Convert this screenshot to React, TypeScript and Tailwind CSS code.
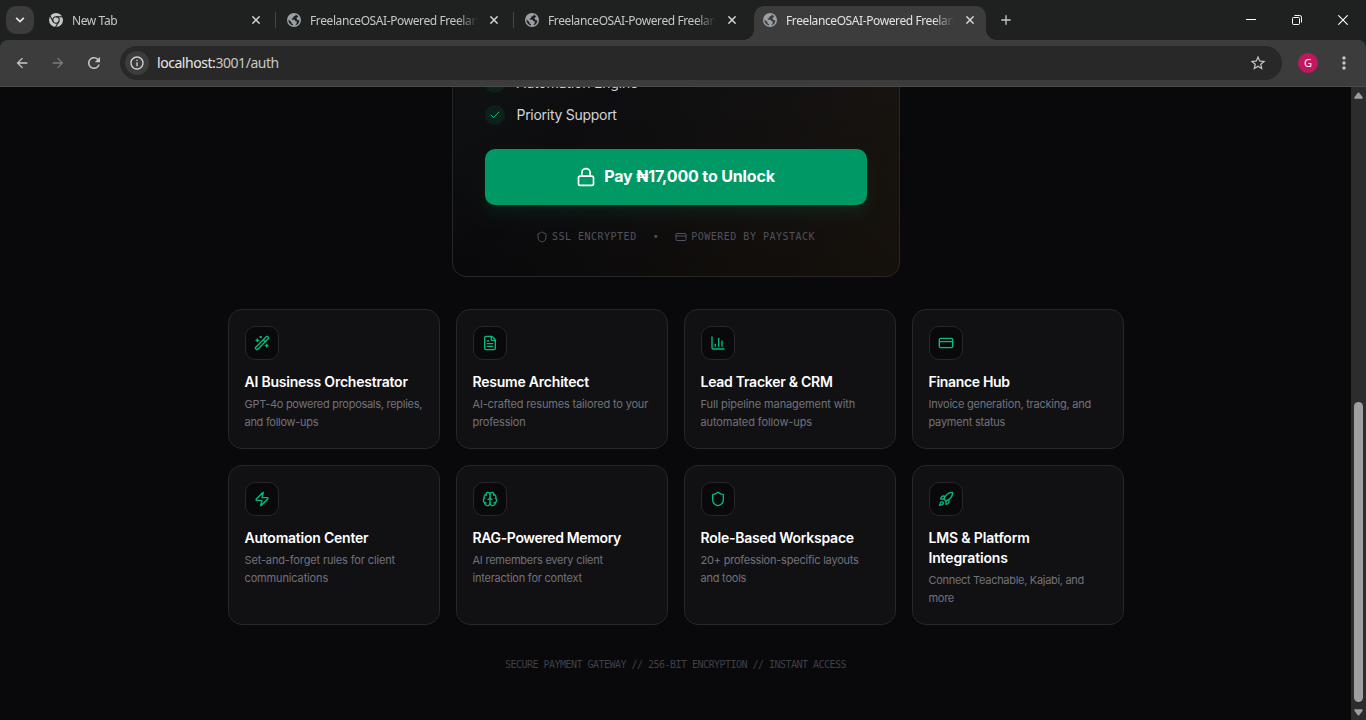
import {
  Brain,
  ChartColumn,
  Check,
  CreditCard,
  FileText,
  Lock,
  Rocket,
  Shield,
  WandSparkles,
  Zap,
} from "lucide-react";
import type { LucideIcon } from "lucide-react";
import {
  MdAdd,
  MdArrowBack,
  MdArrowForward,
  MdInfoOutline,
  MdMoreVert,
  MdRefresh,
  MdStarBorder,
} from "react-icons/md";

interface Tab {
  title: string;
  kind: "chrome" | "site";
  active?: boolean;
}

interface Feature {
  icon: LucideIcon;
  title: string;
  titleClass: string;
  description: string;
  descriptionClass: string;
}

const tabs: Tab[] = [
  { title: "New Tab", kind: "chrome" },
  { title: "FreelanceOSAI-Powered Freelan", kind: "site" },
  { title: "FreelanceOSAI-Powered Freelan", kind: "site" },
  { title: "FreelanceOSAI-Powered Freelan", kind: "site", active: true },
];

const features: Feature[] = [
  {
    icon: WandSparkles,
    title: "AI Business Orchestrator",
    titleClass: "tracking-[-0.22px]",
    description: "GPT-4o powered proposals, replies, and follow-ups",
    descriptionClass: "tracking-[-0.28px]",
  },
  {
    icon: FileText,
    title: "Resume Architect",
    titleClass: "tracking-[-0.22px]",
    description: "AI-crafted resumes tailored to your profession",
    descriptionClass: "tracking-[-0.17px]",
  },
  {
    icon: ChartColumn,
    title: "Lead Tracker & CRM",
    titleClass: "tracking-[-0.27px]",
    description: "Full pipeline management with automated follow-ups",
    descriptionClass: "tracking-[-0.1px]",
  },
  {
    icon: CreditCard,
    title: "Finance Hub",
    titleClass: "tracking-[-0.32px]",
    description: "Invoice generation, tracking, and payment status",
    descriptionClass: "tracking-[-0.23px]",
  },
  {
    icon: Zap,
    title: "Automation Center",
    titleClass: "tracking-[-0.23px]",
    description: "Set-and-forget rules for client communications",
    descriptionClass: "tracking-[-0.14px]",
  },
  {
    icon: Brain,
    title: "RAG-Powered Memory",
    titleClass: "tracking-[-0.36px]",
    description: "AI remembers every client interaction for context",
    descriptionClass: "tracking-[-0.23px]",
  },
  {
    icon: Shield,
    title: "Role-Based Workspace",
    titleClass: "tracking-[-0.25px]",
    description: "20+ profession-specific layouts and tools",
    descriptionClass: "tracking-[-0.22px]",
  },
  {
    icon: Rocket,
    title: "LMS & Platform Integrations",
    titleClass: "tracking-[-0.16px]",
    description: "Connect Teachable, Kajabi, and more",
    descriptionClass: "tracking-[-0.3px]",
  },
];

function ChromeLogo() {
  return (
    <svg className="shrink-0" width="14" height="14" viewBox="0 0 14 14" fill="none">
      <circle cx="7" cy="7" r="7" fill="#c7c7c7" />
      <g stroke="#1f2120" strokeWidth="1.1">
        <circle cx="7" cy="7" r="3.2" />
        <path d="M7 3.8h7" />
        <path d="M7 3.8h7" transform="rotate(120 7 7)" />
        <path d="M7 3.8h7" transform="rotate(240 7 7)" />
      </g>
    </svg>
  );
}

function GlobeIcon({ gap }: { gap: string }) {
  return (
    <svg className="shrink-0" width="14" height="14" viewBox="0 0 14 14" fill="none">
      <circle cx="7" cy="7" r="7" fill="#9aa0a6" />
      <path
        d="M8.6 1.4 8.4 2.9 6.4 3.4 6.2 5.1 4.6 5.8 5 6.7H7.6L8.4 8.3 10 8.6 9.6 10.2 8.2 12.3A5.5 5.5 0 0 0 12.4 7.4L10.6 6.9 9.4 5.4 10.2 4.2 11.3 3.6A5.6 5.6 0 0 0 8.6 1.4Z"
        fill={gap}
      />
      <path d="M1.5 6.4 4.4 8.9V10.2L6 11.2V12.5A5.6 5.6 0 0 1 1.5 6.4Z" fill={gap} />
    </svg>
  );
}

function BrowserTab({ title, kind, active }: Tab) {
  return (
    <div
      className={`relative flex h-[34px] w-[232px] shrink-0 items-center pb-[6px] pl-[9px] ${
        active ? "rounded-t-[10px] bg-[#3c3c3c] text-[#e3e3e3]" : "text-[#c7c7c7]"
      }`}
    >
      {kind === "chrome" ? <ChromeLogo /> : <GlobeIcon gap={active ? "#3c3c3c" : "#1f2120"} />}
      <span className="ml-[9px] w-[168px] pt-px text-[12px] leading-4 tracking-[-0.4px] whitespace-nowrap [mask-image:linear-gradient(to_right,black_88%,transparent_100%)]">
        {title}
      </span>
      <svg className="ml-3 shrink-0" width="8" height="8" viewBox="0 0 8 8" stroke="#d5d5d5" strokeWidth="1.5">
        <path d="M0.4 0.4 7.6 7.6M7.6 0.4 0.4 7.6" />
      </svg>
      {active && (
        <>
          <span className="absolute bottom-0 -left-[10px] size-[10px] bg-[radial-gradient(circle_at_0_0,transparent_9.5px,#3c3c3c_10px)]" />
          <span className="absolute -right-[10px] bottom-0 size-[10px] bg-[radial-gradient(circle_at_100%_0,transparent_9.5px,#3c3c3c_10px)]" />
        </>
      )}
    </div>
  );
}

function TabSeparator({ visible }: { visible: boolean }) {
  return (
    <div className="flex w-[6px] shrink-0 justify-center pt-[6px]">
      {visible && <div className="h-4 w-px bg-[#474747]" />}
    </div>
  );
}

function BrowserChrome() {
  return (
    <header className="h-[87px] shrink-0 bg-[#1f2120] font-['Noto_Sans',sans-serif]">
      <div className="flex h-10 pt-[6px]">
        <button className="mx-[6px] flex size-7 items-center justify-center rounded-[10px] bg-[#3c3c3c]">
          <svg width="10" height="6" viewBox="0 0 10 6" fill="none" stroke="#e3e3e3" strokeWidth="1.8">
            <path d="M1.2 0.9 5 4.6 8.8 0.9" />
          </svg>
        </button>
        {tabs.map((tab, i) => (
          <div key={i} className="flex">
            <BrowserTab {...tab} />
            <TabSeparator visible={i < 2} />
          </div>
        ))}
        <button className="ml-[6px] flex h-7 w-4 items-center justify-center text-[#c7c7c7]">
          <MdAdd size={16} className="shrink-0" />
        </button>
        <div className="-mt-[6px] ml-auto flex h-10 text-white">
          <button className="flex w-[46px] items-center justify-center">
            <svg width="10" height="10" viewBox="0 0 10 10" stroke="currentColor">
              <path d="M0 4.5h10" />
            </svg>
          </button>
          <button className="flex w-[46px] items-center justify-center">
            <svg width="10" height="10" viewBox="0 0 10 10" fill="none" stroke="currentColor">
              <rect x="0.5" y="2.5" width="7" height="7" rx="1" />
              <path d="M2.5 0.5h5.2a1.8 1.8 0 0 1 1.8 1.8v5.2" />
            </svg>
          </button>
          <button className="flex w-[46px] items-center justify-center">
            <svg width="10" height="10" viewBox="0 0 10 10" stroke="currentColor" strokeWidth="1.1">
              <path d="M0.3 0.3 9.7 9.7M9.7 0.3 0.3 9.7" />
            </svg>
          </button>
        </div>
      </div>
      <div className="flex h-[47px] items-center rounded-t-[8px] border-b border-[#4a4a4a] bg-[#3c3c3c] pl-[14px]">
        <MdArrowBack size={16} className="text-[#c7c7c7]" />
        <MdArrowForward size={16} className="ml-5 text-[#7b7b7b]" />
        <MdRefresh size={18} className="ml-[19px] text-[#c7c7c7]" />
        <div className="ml-[17px] flex h-[34px] w-[1162px] items-center rounded-full bg-[#282828] pr-[15px] pl-[5px]">
          <span className="flex size-6 items-center justify-center rounded-full bg-[#3c3c3c]">
            <MdInfoOutline size={16} className="text-[#d5d5d5]" />
          </span>
          <span className="ml-2 text-[14px] leading-5 tracking-[-0.45px] text-[#c7c7c7]">
            <span className="text-[#e8e8e8]">localhost:</span>3001/auth
          </span>
          <MdStarBorder size={18} className="ml-auto text-[#c7c7c7]" />
        </div>
        <span className="ml-4 flex size-5 items-center justify-center rounded-full bg-[#c2185b] text-[11px] text-white">
          G
        </span>
        <MdMoreVert size={20} className="ml-4 text-[#c7c7c7]" />
      </div>
    </header>
  );
}

function Included({ label, labelClass }: { label: string; labelClass: string }) {
  return (
    <li className="flex h-5 items-center gap-3">
      <span className="flex size-5 items-center justify-center rounded-full bg-emerald-500/10">
        <Check size={12} className="text-emerald-500" />
      </span>
      <span className={`text-[14px] leading-5 text-zinc-300 ${labelClass}`}>{label}</span>
    </li>
  );
}

function PaymentCard() {
  return (
    <section className="mx-auto flex h-[560px] w-[448px] shrink-0 flex-col justify-end rounded-[14px] border border-zinc-800 bg-[linear-gradient(to_bottom_right,rgb(0_188_125/0.05),transparent_50%,rgb(254_154_0/0.05)),linear-gradient(to_bottom,#111113_50%,#09090b)] p-8">
      <ul className="space-y-3">
        <Included label="Automation Engine" labelClass="tracking-[-0.18px]" />
        <Included label="Priority Support" labelClass="tracking-[-0.28px]" />
      </ul>
      <button className="mt-6 flex h-14 shrink-0 items-center justify-center gap-2 rounded-[10px] bg-emerald-600 text-white shadow-lg shadow-emerald-500/10">
        <Lock size={20} />
        <span className="pb-[2px] text-[16px] leading-6 font-bold tracking-[-0.15px]">Pay ₦17,000 to Unlock</span>
      </button>
      <div className="mt-6 flex h-[15px] shrink-0 items-center justify-center font-['DejaVu_Sans_Mono',monospace] text-[10px] leading-[15px] tracking-[0.5px] text-zinc-600">
        <Shield size={12} />
        <span className="ml-1">SSL ENCRYPTED</span>
        <span className="mx-4">•</span>
        <CreditCard size={12} />
        <span className="ml-1">POWERED BY PAYSTACK</span>
      </div>
    </section>
  );
}

function FeatureCard({ icon: Icon, title, titleClass, description, descriptionClass }: Feature) {
  return (
    <div className="rounded-[14px] border border-zinc-800 bg-[#111113] p-4">
      <div className="mb-3 flex size-[34px] items-center justify-center rounded-[10px] border border-zinc-800 bg-[#09090b]">
        <Icon size={16} className="text-emerald-500" />
      </div>
      <h3 className={`mb-1 text-[14px] leading-5 font-semibold text-white ${titleClass}`}>{title}</h3>
      <p className={`text-[11px] leading-[17.875px] text-zinc-500 ${descriptionClass}`}>{description}</p>
    </div>
  );
}

function Scrollbar() {
  return (
    <div className="flex w-[15px] shrink-0 flex-col items-center bg-[#2c2c2c]">
      <svg className="mt-[5px] shrink-0" width="9" height="7" viewBox="0 0 10 7" fill="#9f9f9f">
        <path d="M4.2 0.5Q5 -0.3 5.8 0.5L9.5 5.5Q9.8 7 9 7H1Q0.2 7 0.5 5.5Z" />
      </svg>
      <div className="mt-auto h-[300px] w-[9px] rounded-full bg-[#9f9f9f]" />
      <svg className="mt-[7px] mb-1 shrink-0" width="9" height="7" viewBox="0 0 10 7" fill="#9f9f9f">
        <path d="M4.2 6.5Q5 7.3 5.8 6.5L9.5 1.5Q9.8 0 9 0H1Q0.2 0 0.5 1.5Z" />
      </svg>
    </div>
  );
}

export default function App() {
  return (
    <div className="flex h-[720px] w-[1366px] flex-col overflow-hidden bg-[#09090b]">
      <BrowserChrome />
      <div className="flex min-h-0 flex-1">
        <main className="flex min-w-0 flex-1 flex-col justify-end overflow-hidden pb-[48.5px] font-['Inter',sans-serif]">
          <PaymentCard />
          <div className="mx-auto mt-8 grid w-[896px] shrink-0 grid-cols-4 gap-4">
            {features.map((feature) => (
              <FeatureCard key={feature.title} {...feature} />
            ))}
          </div>
          <p className="mt-8 shrink-0 text-center font-['DejaVu_Sans_Mono',monospace] text-[10px] leading-[15px] tracking-[-0.52px] text-zinc-700">
            SECURE PAYMENT GATEWAY // 256-BIT ENCRYPTION // INSTANT ACCESS
          </p>
        </main>
        <Scrollbar />
      </div>
    </div>
  );
}
